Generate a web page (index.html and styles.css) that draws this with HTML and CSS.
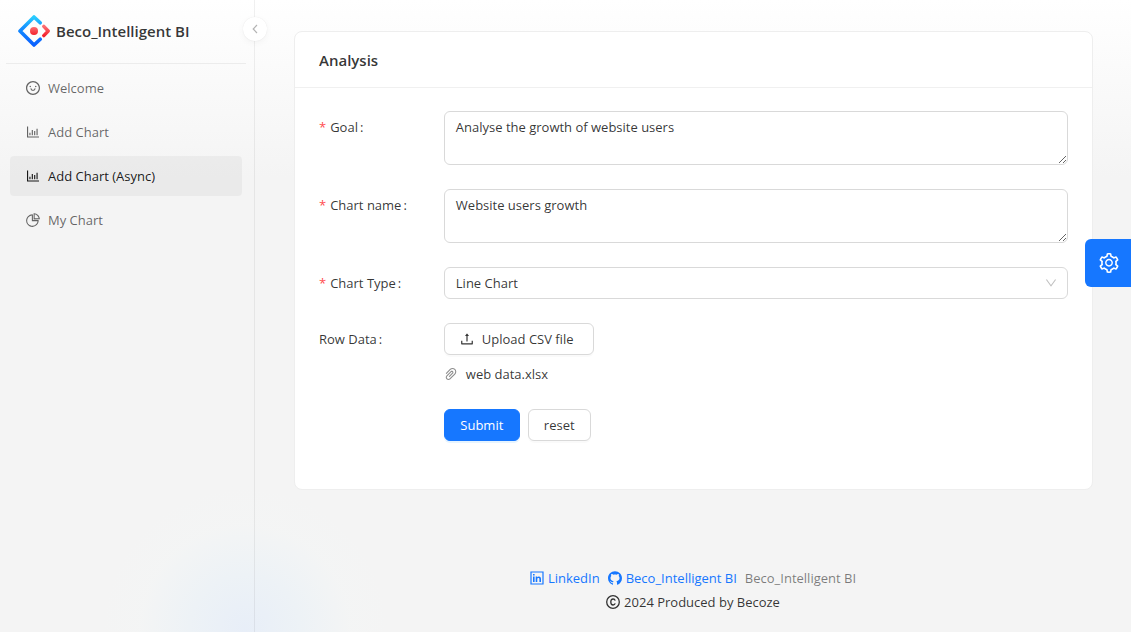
FILE: index.html
```html
<!DOCTYPE html>
<html lang="en">
<head>
<meta charset="utf-8">
<meta name="viewport" content="width=device-width, initial-scale=1">
<title>Beco_Intelligent BI</title>
<link rel="stylesheet" href="styles.css">
</head>
<body>
<svg class="sprite" aria-hidden="true">
  <symbol id="bar-chart" viewBox="64 64 896 896"><path d="M888 792H200V168c0-4.400-3.600-8-8-8h-56c-4.400 0-8 3.600-8 8v688c0 4.400 3.600 8 8 8h752c4.400 0 8-3.600 8-8v-56c0-4.400-3.600-8-8-8zM288 712h56c4.400 0 8-3.600 8-8V560c0-4.400-3.600-8-8-8h-56c-4.400 0-8 3.600-8 8v144c0 4.400 3.600 8 8 8zm152 0h56c4.400 0 8-3.600 8-8V384c0-4.400-3.600-8-8-8h-56c-4.400 0-8 3.600-8 8v320c0 4.400 3.600 8 8 8zm152 0h56c4.400 0 8-3.600 8-8V462c0-4.400-3.600-8-8-8h-56c-4.400 0-8 3.600-8 8v242c0 4.400 3.600 8 8 8zm152 0h56c4.400 0 8-3.600 8-8V304c0-4.400-3.600-8-8-8h-56c-4.400 0-8 3.600-8 8v400c0 4.400 3.600 8 8 8z"/></symbol>
</svg>
<div class="layout">
  <aside class="sider">
    <header class="brand">
      <svg class="logo" viewBox="0 0 32 32" fill="none" aria-hidden="true">
        <defs>
          <linearGradient id="blue" x1="0" y1="0" x2="0" y2="1"><stop offset="0" stop-color="#29cdff"/><stop offset=".4" stop-color="#148eff"/><stop offset="1" stop-color="#0a60ff"/></linearGradient>
          <linearGradient id="red" x1="0" y1="0" x2="0" y2="1"><stop offset="0" stop-color="#fa6e73"/><stop offset="1" stop-color="#f5222d"/></linearGradient>
        </defs>
        <path d="M22.200 7.800 16 2 2 16l14 14 6.200-5.800" stroke="url(#blue)" stroke-width="3.600" stroke-linejoin="round" stroke-linecap="round"/>
        <path d="M25.800 11.400 30.200 16l-4.400 4.600" stroke="url(#red)" stroke-width="3.400" stroke-linejoin="round" stroke-linecap="round"/>
        <circle cx="16" cy="16" r="4" fill="url(#red)"/>
      </svg>
      <h1 class="brand-name">Beco_Intelligent BI</h1>
    </header>
    <nav class="menu">
      <a class="menu-item" href="#">
        <svg class="icon" viewBox="64 64 896 896" aria-hidden="true"><path d="M288 421a48 48 0 1096 0 48 48 0 10-96 0zm352 0a48 48 0 1096 0 48 48 0 10-96 0zM512 64C264.600 64 64 264.600 64 512s200.600 448 448 448 448-200.600 448-448S759.400 64 512 64zm0 820a372 372 0 110-744 372 372 0 010 744zM664 533h-48.100c-4.200 0-7.800 3.200-8.100 7.400C604 589.900 562.500 629 512 629s-92.100-39.100-95.800-88.600c-.3-4.200-3.900-7.400-8.100-7.400H360a8 8 0 00-8 8.400c4.400 84.300 74.500 151.600 160 151.600s155.600-67.300 160-151.600a8 8 0 00-8-8.400z" fill-rule="evenodd"/></svg>
        <span>Welcome</span>
      </a>
      <a class="menu-item" href="#">
        <svg class="icon" aria-hidden="true"><use href="#bar-chart"/></svg>
        <span>Add Chart</span>
      </a>
      <a class="menu-item selected" href="#" aria-current="page">
        <svg class="icon" aria-hidden="true"><use href="#bar-chart"/></svg>
        <span>Add Chart (Async)</span>
      </a>
      <a class="menu-item" href="#">
        <svg class="icon" viewBox="64 64 896 896" aria-hidden="true"><path d="M864 518H506V160c0-4.400-3.600-8-8-8h-26a398.460 398.460 0 00-282.800 117.100 398.190 398.190 0 00-85.700 127.100A397.610 397.610 0 0072 552a398.460 398.460 0 00117.100 282.800c36.700 36.700 79.500 65.600 127.100 85.700A397.610 397.610 0 00472 952a398.460 398.460 0 00282.800-117.100c36.700-36.700 65.600-79.500 85.700-127.100A397.610 397.610 0 00872 552v-26c0-4.400-3.600-8-8-8zM705.700 787.800A331.590 331.590 0 01470.400 884c-88.100-.4-170.900-34.900-233.200-97.200C174.500 724.100 140 640.700 140 552c0-88.700 34.500-172.100 97.200-234.800 54.600-54.600 124.900-87.900 200.800-95.500V586h364.300c-7.700 76.300-41.300 147-96.600 201.800zM952 462.400l-2.600-28.200c-8.500-92.100-49.400-179-115.200-244.600A399.400 399.400 0 00589 74.600L560.700 72c-4.700-.4-8.700 3.200-8.700 7.900V464c0 4.400 3.600 8 8 8l384-1c4.700 0 8.400-4 8-8.600zm-332.200-58.200V147.600a332.240 332.240 0 01166.400 89.800c45.700 45.600 77 103.600 90 166.100l-256.400.7z"/></svg>
        <span>My Chart</span>
      </a>
    </nav>
    <button class="collapse" type="button" aria-label="Collapse menu">
      <svg viewBox="0 0 12 12" aria-hidden="true"><path d="M8 2 4.200 6 8 10"/></svg>
    </button>
  </aside>

  <div class="page">
    <main class="content">
      <section class="card">
        <h2 class="card-title">Analysis</h2>
        <form class="form">
          <div class="row">
            <label class="label required" for="goal">Goal</label>
            <textarea class="field area" id="goal" rows="2" required>Analyse the growth of website users</textarea>
          </div>
          <div class="row">
            <label class="label required" for="name">Chart name</label>
            <textarea class="field area" id="name" rows="2" required>Website users growth</textarea>
          </div>
          <div class="row">
            <label class="label required" for="type">Chart Type</label>
            <div class="select">
              <select class="field picker" id="type"><option>Line Chart</option></select>
              <svg class="caret" viewBox="64 64 896 896" aria-hidden="true"><path d="M884 256h-75c-5.100 0-9.900 2.500-12.900 6.600L512 654.200 227.900 262.600c-3-4.100-7.800-6.600-12.900-6.600h-75c-6.500 0-10.300 7.400-6.500 12.700l352.600 486.100c12.800 17.600 39 17.600 51.700 0l352.600-486.100c3.900-5.300.1-12.700-6.400-12.700z"/></svg>
            </div>
          </div>
          <div class="row">
            <label class="label" for="upload">Row Data</label>
            <div class="upload">
              <button class="button wide" id="upload" type="button">
                <svg class="icon" viewBox="64 64 896 896" aria-hidden="true"><path d="M400 317.700h73.900V656c0 4.400 3.600 8 8 8h60c4.400 0 8-3.600 8-8V317.700H624c6.700 0 10.400-7.700 6.300-12.900L518.300 163a8 8 0 00-12.600 0l-112 141.700c-4.100 5.300-.4 13 6.300 13zM878 626h-60c-4.400 0-8 3.600-8 8v154H214V634c0-4.400-3.600-8-8-8h-60c-4.400 0-8 3.600-8 8v198c0 17.700 14.300 32 32 32h684c17.700 0 32-14.300 32-32V634c0-4.400-3.600-8-8-8z"/></svg>
                <span>Upload CSV file</span>
              </button>
              <div class="file">
                <svg class="icon clip" viewBox="64 64 896 896" aria-hidden="true"><path d="M779.300 196.600c-94.200-94.200-247.600-94.200-341.700 0l-261 260.800c-1.700 1.700-2.600 4-2.600 6.400s.9 4.700 2.600 6.400l36.900 36.900a9 9 0 0012.700 0l261-260.800c32.400-32.400 75.500-50.200 121.300-50.200s88.900 17.800 121.200 50.200c32.400 32.400 50.200 75.500 50.200 121.200 0 45.800-17.800 88.800-50.200 121.200l-266 265.900-43.100 43.100c-40.300 40.300-105.800 40.300-146.100 0-19.500-19.500-30.200-45.400-30.200-73s10.700-53.500 30.200-73l263.900-263.800c6.700-6.600 15.500-10.300 24.900-10.300h.1c9.400 0 18.100 3.700 24.700 10.300 6.700 6.700 10.300 15.500 10.300 24.900 0 9.300-3.700 18.100-10.300 24.700L372.400 653c-1.700 1.700-2.600 4-2.600 6.400s.9 4.700 2.600 6.400l36.900 36.900a9 9 0 0012.700 0l215.600-215.600c19.900-19.900 30.800-46.300 30.800-74.400s-11-54.600-30.800-74.400c-41.100-41.100-107.900-41-149 0L463 364 224.800 602.100A172.220 172.220 0 00174 724.800c0 46.300 18.100 89.800 50.800 122.500 33.900 33.800 78.300 50.700 122.700 50.700 44.400 0 88.800-16.900 122.600-50.700l309.200-309C824.800 492.700 850 432 850 367.500c.1-64.600-25.100-125.300-70.700-170.900z"/></svg>
                <span>web data.xlsx</span>
              </div>
            </div>
          </div>
          <div class="row">
            <div class="actions">
              <button class="button primary" type="submit">Submit</button>
              <button class="button" type="reset">reset</button>
            </div>
          </div>
        </form>
      </section>
    </main>

    <footer class="footer">
      <div class="links">
        <a class="link" href="#">
          <svg class="icon" viewBox="0 0 14 14" aria-hidden="true"><path d="M1 1h12v12H1z" fill="none" stroke="currentColor" stroke-width="1.200"/><path d="M3 5.500h1.600V11H3zM3 3h1.600v1.500H3zM5.700 5.500h1.500v.8c.4-.6 1-.9 1.700-.9 1.500 0 2.100.9 2.100 2.500V11H9.400V8.200c0-.9-.3-1.300-.9-1.300-.8 0-1.200.5-1.200 1.400V11H5.700z"/></svg>
          <span>LinkedIn</span>
        </a>
        <a class="link" href="#">
          <svg class="icon" viewBox="64 64 896 896" aria-hidden="true"><path d="M511.600 76.300C264.300 76.200 64 276.400 64 523.500 64 718.900 189.300 885 363.800 946c23.500 5.900 19.900-10.800 19.900-22.200v-77.500c-135.700 15.900-141.200-73.900-150.300-88.900C215 726 171.500 718 184.500 703c30.900-15.900 62.400 4 98.900 57.900 26.400 39.100 77.900 32.500 104 26 5.700-23.500 17.900-44.500 34.700-60.800-140.600-25.200-199.200-111-199.200-213 0-49.500 16.300-95 48.300-131.700-20.400-60.500 1.900-112.300 4.900-120 58.100-5.200 118.500 41.600 123.200 45.300 33-8.900 70.700-13.600 112.900-13.600 42.400 0 80.200 4.900 113.500 13.900 11.300-8.600 67.300-48.800 121.300-43.900 2.900 7.700 24.700 58.300 5.500 118 32.400 36.800 48.900 82.700 48.900 132.300 0 102.200-59 188.100-200 212.900a127.500 127.500 0 0138.100 91v112.500c.8 9 0 17.900 15 17.900 177.100-59.700 304.600-227 304.600-424.100 0-247.200-200.400-447.300-447.500-447.300z"/></svg>
          <span>Beco_Intelligent BI</span>
        </a>
        <a class="link muted" href="#">Beco_Intelligent BI</a>
      </div>
      <div class="copyright">
        <svg class="icon outline" viewBox="0 0 14 14" aria-hidden="true"><circle cx="7" cy="7" r="6.300"/><path d="M9.200 5.600C8.900 4.600 8.200 4 7.100 4 5.600 4 4.800 5 4.800 7s.8 3 2.300 3c1.100 0 1.800-.6 2.100-1.600"/></svg>
        <span>2024 Produced by Becoze</span>
      </div>
    </footer>
  </div>
</div>

<button class="settings" type="button" aria-label="Settings">
  <svg viewBox="64 64 896 896" aria-hidden="true"><path d="M924.800 625.700l-65.500-56c3.100-19 4.700-38.400 4.700-57.800s-1.600-38.800-4.700-57.800l65.500-56a32.030 32.030 0 009.300-35.200l-.9-2.600a443.740 443.740 0 00-79.700-137.900l-1.800-2.100a32.120 32.120 0 00-35.100-9.500l-81.300 28.900c-30-24.600-63.500-44-99.700-57.600l-15.700-85a32.050 32.050 0 00-25.800-25.700l-2.700-.5c-52.100-9.400-106.900-9.400-159 0l-2.700.5a32.050 32.050 0 00-25.800 25.700l-15.800 85.400a351.860 351.860 0 00-99 57.400l-81.900-29.100a32 32 0 00-35.100 9.500l-1.800 2.100a446.020 446.020 0 00-79.700 137.900l-.9 2.600c-4.500 12.500-.8 26.500 9.300 35.200l66.300 56.600c-3.100 18.800-4.600 38-4.600 57.100 0 19.200 1.500 38.400 4.600 57.100L99 625.500a32.030 32.030 0 00-9.300 35.200l.9 2.600c18.100 50.400 44.900 96.900 79.700 137.900l1.800 2.100a32.120 32.120 0 0035.100 9.500l81.900-29.100c29.800 24.500 63.100 43.900 99 57.400l15.800 85.400a32.050 32.050 0 0025.800 25.700l2.700.5a449.400 449.400 0 00159 0l2.700-.5a32.050 32.050 0 0025.800-25.700l15.700-85a350 350 0 0099.700-57.600l81.300 28.900a32 32 0 0035.100-9.500l1.800-2.100c34.800-41.100 61.600-87.500 79.700-137.900l.9-2.600c4.500-12.300.8-26.300-9.300-35zM788.300 465.900c2.500 15.100 3.800 30.600 3.800 46.100s-1.300 31-3.800 46.100l-6.600 40.100 74.700 63.900a370.030 370.030 0 01-42.600 73.600L721 702.800l-31.400 25.800c-23.900 19.600-50.500 35-79.300 45.800l-38.100 14.300-17.900 97a377.500 377.500 0 01-85 0l-17.900-97.200-37.800-14.500c-28.500-10.800-55-26.200-78.700-45.700l-31.400-25.900-93.400 33.200c-17-22.900-31.200-47.600-42.600-73.600l75.500-64.500-6.500-40c-2.400-14.900-3.700-30.300-3.700-45.500 0-15.300 1.200-30.600 3.700-45.500l6.500-40-75.500-64.500c11.300-26.100 25.600-50.700 42.600-73.600l93.400 33.200 31.400-25.900c23.700-19.500 50.200-34.900 78.700-45.700l37.900-14.300 17.900-97.200c28.100-3.200 56.800-3.200 85 0l17.900 97 38.100 14.300c28.700 10.800 55.400 26.200 79.300 45.800l31.400 25.800 92.800-32.900c17 22.900 31.200 47.600 42.600 73.600L781.800 426l6.500 39.900zM512 326c-97.200 0-176 78.800-176 176s78.800 176 176 176 176-78.800 176-176-78.800-176-176-176zm79.200 255.200A111.600 111.600 0 01512 614c-29.900 0-58-11.700-79.200-32.800A111.600 111.600 0 01400 502c0-29.900 11.700-58 32.800-79.200C454 401.600 482.100 390 512 390c29.900 0 58 11.600 79.200 32.800A111.600 111.600 0 01624 502c0 29.900-11.700 58-32.800 79.200z"/></svg>
</button>
</body>
</html>
```

FILE: styles.css
```css
* {
  box-sizing: border-box;
}

body {
  margin: 0;
  color: rgba(0, 0, 0, 0.8);
  font: 13px/22px "Open Sans", "Noto Sans", sans-serif;
  background: #f4f4f4;
}

button,
select,
textarea {
  font: inherit;
  color: inherit;
}

a {
  text-decoration: none;
}

.sprite {
  display: none;
}

.icon {
  flex: none;
  width: 14px;
  height: 14px;
  fill: currentColor;
}

.icon.outline {
  fill: none;
  stroke: currentColor;
  stroke-width: 1.3;
}

.layout {
  display: flex;
  min-height: 100vh;
  background:
    radial-gradient(circle at 245px 630px, rgba(225, 235, 250, 0.65) 0, rgba(230, 240, 248, 0.5) 55px, rgba(243, 246, 246, 0.35) 105px, rgba(244, 246, 245, 0) 145px),
    linear-gradient(#fff, #f4f4f4 28%);
}

/* Sidebar */
.sider {
  position: relative;
  flex: none;
  width: 255px;
  border-right: 1px solid rgba(5, 5, 5, 0.06);
}

.brand {
  display: flex;
  align-items: center;
  gap: 6px;
  height: 64px;
  margin: 0 8px 0 6px;
  padding: 0 12px 2px;
  border-bottom: 1px solid rgba(5, 5, 5, 0.06);
}

.logo {
  width: 32px;
  height: 32px;
}

.brand-name {
  margin: 0;
  font-size: 15px;
  font-weight: 600;
  line-height: 32px;
}

.menu {
  display: flex;
  flex-direction: column;
  gap: 4px;
  padding: 4px 12px 0 10px;
}

.menu-item {
  display: flex;
  align-items: center;
  gap: 8px;
  height: 40px;
  padding: 0 16px;
  border-radius: 4px;
  color: rgba(0, 0, 0, 0.6);
}

.menu-item.selected {
  color: rgba(0, 0, 0, 0.9);
  background: rgba(0, 0, 0, 0.04);
}

.collapse {
  position: absolute;
  top: 17px;
  right: -13px;
  display: grid;
  place-items: center;
  width: 24px;
  height: 24px;
  padding: 0;
  border: 0;
  border-radius: 50%;
  background: #fff;
  box-shadow: 0 2px 8px -2px rgba(0, 0, 0, 0.08), 0 0 1px rgba(25, 15, 15, 0.1);
}

.collapse svg {
  width: 12px;
  height: 12px;
  fill: none;
  stroke: #b4b4b4;
  stroke-width: 1.2;
}

/* Page */
.page {
  display: flex;
  flex: 1;
  flex-direction: column;
  justify-content: space-between;
  min-width: 0;
}

.content {
  padding: 31px 38px 0 39px;
}

.card {
  border: 1px solid #eee;
  border-radius: 8px;
  background: #fff;
}

.card-title {
  margin: 0;
  padding: 2px 24px 0;
  border-bottom: 1px solid #f0f0f0;
  font-size: 15px;
  font-weight: 600;
  line-height: 53px;
}

.form {
  display: flex;
  flex-direction: column;
  gap: 24px;
  padding: 23px 24px 48px;
}

.row {
  display: grid;
  grid-template-columns: 1fr 5fr;
}

.label {
  justify-self: start;
  line-height: 32px;
}

.label::after {
  content: ":";
  margin-left: 2px;
}

.label.required::before {
  content: "*";
  margin-right: 4px;
  color: #ff4d4f;
}

.field {
  display: block;
  width: 100%;
  border: 1px solid #d9d9d9;
  border-radius: 6px;
  background: #fff;
}

.area {
  min-height: 54px;
  padding: 4px 11px;
  resize: vertical;
}

.select {
  position: relative;
}

.picker {
  height: 32px;
  padding: 0 32px 0 11px;
  appearance: none;
}

.caret {
  position: absolute;
  top: 10px;
  right: 11px;
  width: 12px;
  height: 12px;
  fill: rgba(0, 0, 0, 0.25);
  pointer-events: none;
}

.button {
  display: inline-flex;
  align-items: center;
  gap: 8px;
  height: 32px;
  padding: 0 15px;
  border: 1px solid #d9d9d9;
  border-radius: 6px;
  background: #fff;
  box-shadow: 0 2px 0 rgba(0, 0, 0, 0.02);
}

.button.wide {
  min-width: 150px;
}

.button.primary {
  justify-content: center;
  min-width: 76px;
  border-color: #1677ff;
  color: #fff;
  background: #1677ff;
  box-shadow: 0 2px 0 rgba(5, 145, 255, 0.1);
}

.upload {
  display: flex;
  flex-direction: column;
  align-items: flex-start;
  gap: 8px;
}

.file {
  display: flex;
  align-items: center;
  gap: 8px;
}

.clip {
  fill: rgba(0, 0, 0, 0.45);
}

.actions {
  display: flex;
  grid-column: 2;
  gap: 8px;
}

/* Footer */
.footer {
  display: flex;
  flex-direction: column;
  align-items: center;
  gap: 2px;
  padding: 48px 16px 19px;
}

.links {
  display: flex;
  gap: 8px;
}

.link,
.copyright {
  display: flex;
  align-items: center;
  gap: 4px;
}

.link {
  color: #1677ff;
}

.link.muted {
  color: rgba(0, 0, 0, 0.5);
}

.settings {
  position: fixed;
  top: 239px;
  right: 0;
  display: grid;
  place-items: center;
  width: 46px;
  height: 48px;
  padding: 0 0 0 2px;
  border: 0;
  border-radius: 6px 0 0 6px;
  background: #1677ff;
}

.settings svg {
  width: 20px;
  height: 20px;
  fill: #fff;
}
```
